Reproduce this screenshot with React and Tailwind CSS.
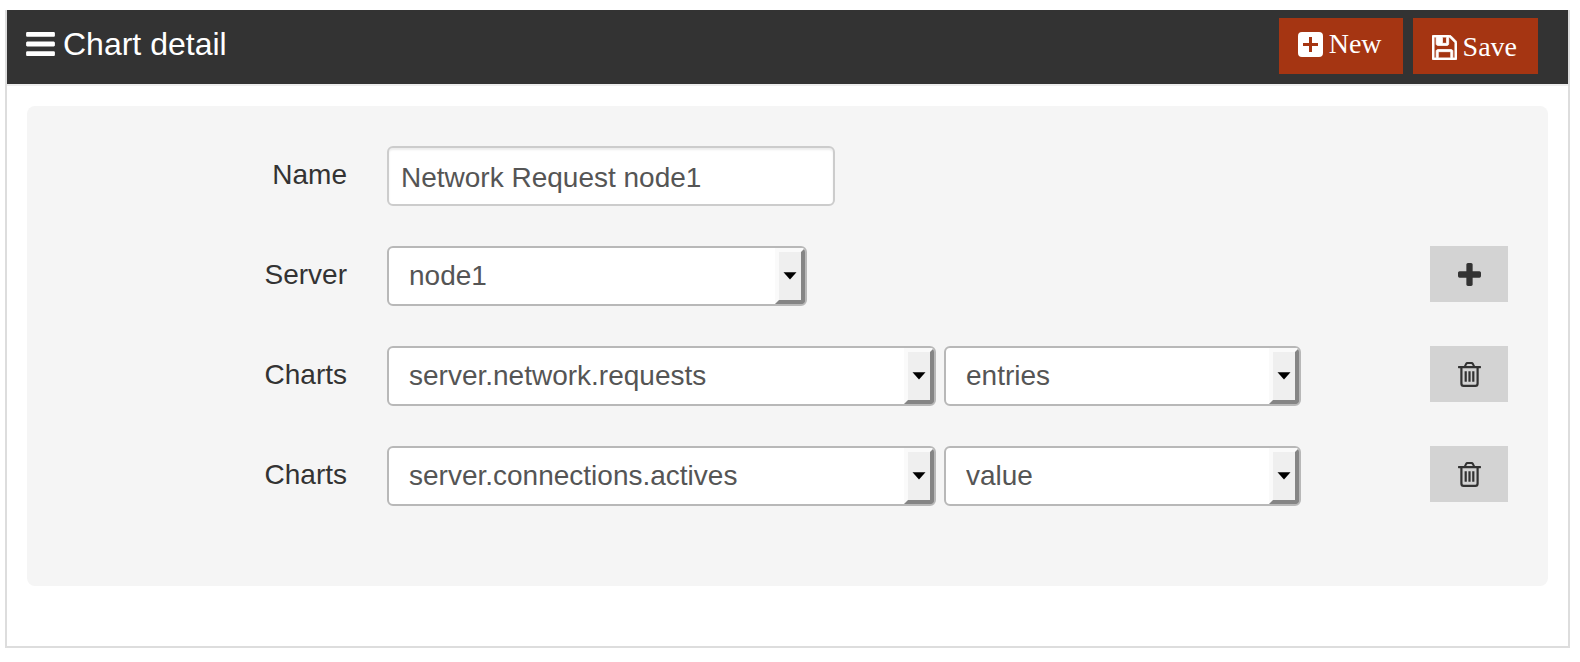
import React, { useState } from "react";

const ICONS = {
  bars: {
    box: "128 256 1536 1280",
    d: "M1664 1344v128q0 26-19 45t-45 19h-1408q-26 0-45-19t-19-45v-128q0-26 19-45t45-19h1408q26 0 45 19t19 45zm0-512v128q0 26-19 45t-45 19h-1408q-26 0-45-19t-19-45v-128q0-26 19-45t45-19h1408q26 0 45 19t19 45zm0-512v128q0 26-19 45t-45 19h-1408q-26 0-45-19t-19-45v-128q0-26 19-45t45-19h1408q26 0 45 19t19 45z",
  },
  plusSquare: {
    box: "0 0 25 25",
    d: "M4 0h17a4 4 0 0 1 4 4v17a4 4 0 0 1-4 4H4a4 4 0 0 1-4-4V4a4 4 0 0 1 4-4zM11 5v6H5v3h6v6h3v-6h6v-3h-6V5z",
  },
  floppy: {
    box: "128 128 1536 1536",
    stroke: 50,
    d: "M512 1536h768v-384h-768v384zm896 0h128v-896q0-14-10-38.5t-20-34.5l-281-281q-10-10-34-20t-39-10v416q0 40-28 68t-68 28h-576q-40 0-68-28t-28-68v-416h-128v1280h128v-416q0-40 28-68t68-28h832q40 0 68 28t28 68v416zm-384-928v-320q0-13-9.5-22.5t-22.5-9.5h-192q-13 0-22.5 9.5t-9.5 22.5v320q0 13 9.5 22.5t22.5 9.5h192q13 0 22.5-9.5t9.5-22.5zm640 32v928q0 40-28 68t-68 28h-1344q-40 0-68-28t-28-68v-1344q0-40 28-68t68-28h928q40 0 88 20t76 48l280 280q28 28 48 76t20 88z",
  },
  plus: {
    box: "192 128 1408 1408",
    d: "M1600 736v192q0 40-28 68t-68 28h-416v416q0 40-28 68t-68 28h-192q-40 0-68-28t-28-68v-416h-416q-40 0-68-28t-28-68v-192q0-40 28-68t68-28h416v-416q0-40 28-68t68-28h192q40 0 68 28t28 68v416h416q40 0 68 28t28 68z",
  },
  trash: {
    box: "0 0 23 25",
    d: "M.6 4H6l1.200-2.600Q7.900 0 9.300 0h4.400q1.400 0 2.100 1.400L17 4h5.400q.6 0 .6.600v1q0 .6-.6.600h-1.700V21.500q0 3.500-3.200 3.500h-12q-3.200 0-3.200-3.500V6.200H.6Q0 6.200 0 5.600v-1Q0 4 .6 4zM8.200 4h6.600l-.8-1.600q-.2-.4-.7-.4H9.700q-.5 0-.7.400zM4.500 6.200v15q0 1.600 1.300 1.600h11.400q1.300 0 1.300-1.600v-15zM6.600 9.300h2.200v10.400H6.600zM10.400 9.300h2.200v10.400h-2.200zM14.200 9.300h2.200v10.400h-2.200z",
  },
};

function Icon({ name, className }) {
  const icon = ICONS[name];
  return (
    <svg viewBox={icon.box} className={className} fill="currentColor" aria-hidden="true">
      <path d={icon.d} fillRule="evenodd" stroke={icon.stroke ? "currentColor" : "none"} strokeWidth={icon.stroke} />
    </svg>
  );
}

function Row({ label, htmlFor, children, action }) {
  return (
    <div className="flex items-start">
      <label htmlFor={htmlFor} className="w-[280px] shrink-0 text-right leading-[58px] text-[#333]">
        {label}
      </label>
      <div className="ml-10 flex gap-2">{children}</div>
      {action}
    </div>
  );
}

function Select({ id, options, className, ...rest }) {
  return (
    <div className={"relative " + className}>
      <select
        id={id}
        defaultValue={options[0]}
        className="block h-[60px] w-full appearance-none rounded-md border-2 border-[#b8b8b8] bg-white pr-8 pl-5 text-[#555]"
        {...rest}
      >
        {options.map((o) => (
          <option key={o}>{o}</option>
        ))}
      </select>
      <span className="pointer-events-none absolute inset-y-[2px] right-[2px] flex w-[30px] items-center justify-center rounded-r-sm border-4 border-t-[#fafafa] border-r-[#858585] border-b-[#858585] border-l-[#fafafa] bg-[#efefef]">
        <svg viewBox="0 0 14 8" className="h-2 w-[14px] shrink-0" aria-hidden="true">
          <path d="M0.500 0.200h13L7 7.500z" fill="#000" />
        </svg>
      </span>
    </div>
  );
}

function SmallButton({ label, children }) {
  return (
    <button
      type="button"
      aria-label={label}
      className="ml-auto flex h-14 w-[78px] shrink-0 items-center justify-center bg-[#d3d3d3] text-[#333]"
    >
      {children}
    </button>
  );
}

export default function App() {
  const [name, setName] = useState("Network Request node1");
  return (
    <main className="bg-white pt-[10px] pr-[10px] pb-[14px] pl-[5px] font-['Liberation_Sans',Arial,sans-serif] text-[28px]">
      <section className="border-x-2 border-b-2 border-[#ddd] pb-[60px]">
        <header className="flex items-start justify-between border-b-2 border-[#eee] bg-[#333] bg-clip-padding pr-[30px] pb-[6px] pl-[19px] text-white">
          <h1 className="flex items-center gap-2 text-[32px] leading-[68px]">
            <Icon name="bars" className="h-6 w-[29px]" />
            Chart detail
          </h1>
          <div className="flex gap-[10px] pt-2 font-['Liberation_Serif','Times_New_Roman',serif]">
            <button type="button" className="flex h-14 items-center gap-[6px] bg-[#a53512] pr-[21px] pb-1 pl-[19px]">
              <Icon name="plusSquare" className="size-[25px]" />
              New
            </button>
            <button type="button" className="flex h-14 items-center gap-[6px] bg-[#a53512] pt-[2px] pr-[21px] pl-[19px]">
              <Icon name="floppy" className="size-[25px]" />
              Save
            </button>
          </div>
        </header>

        <form
          className="mx-5 mt-5 flex flex-col gap-10 rounded-lg bg-[#f5f5f5] px-10 pt-10 pb-20"
          onSubmit={(e) => e.preventDefault()}
        >
          <Row label="Name" htmlFor="name">
            <input
              id="name"
              type="text"
              value={name}
              onChange={(e) => setName(e.target.value)}
              className="h-[60px] w-[448px] rounded-md border-2 border-[#ccc] bg-white px-3 pt-1 text-[#555] shadow-[inset_0_2px_2px_rgba(0,0,0,0.075)]"
            />
          </Row>
          <Row
            label="Server"
            htmlFor="server"
            action={
              <SmallButton label="Add chart">
                <Icon name="plus" className="size-[23px]" />
              </SmallButton>
            }
          >
            <Select id="server" options={["node1"]} className="w-[420px]" />
          </Row>
          {[
            ["server.network.requests", "entries"],
            ["server.connections.actives", "value"],
          ].map(([metric, field], i) => (
            <Row
              key={metric}
              label="Charts"
              htmlFor={"chart-" + i}
              action={
                <SmallButton label="Delete chart">
                  <Icon name="trash" className="h-[25px] w-[23px]" />
                </SmallButton>
              }
            >
              <Select id={"chart-" + i} options={[metric]} className="w-[549px]" />
              <Select id={"field-" + i} options={[field]} aria-label="Field" className="w-[357px]" />
            </Row>
          ))}
        </form>
      </section>
    </main>
  );
}
